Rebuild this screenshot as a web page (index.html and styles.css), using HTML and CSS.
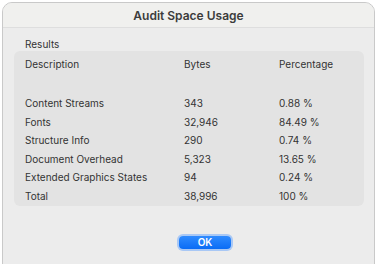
FILE: index.html
```html
<!DOCTYPE html>
<html lang="en">
<head>
<meta charset="UTF-8" />
<meta name="viewport" content="width=device-width, initial-scale=1.0"/>
<title>Audit Space Usage</title>
<link rel="stylesheet" href="styles.css">
</head>
<body>

<div class="window">
    <div class="titlebar">Audit Space Usage</div>
    <div class="content">
        <p class="group-label">Results</p>
        <div class="results">
            <div class="row head">
                <span>Description</span>
                <span>Bytes</span>
                <span>Percentage</span>
            </div>
            <div class="row blank"></div>
            <div class="row">
                <span>Content Streams</span>
                <span>343</span>
                <span>0.88 %</span>
            </div>
            <div class="row">
                <span>Fonts</span>
                <span>32,946</span>
                <span>84.49 %</span>
            </div>
            <div class="row">
                <span>Structure Info</span>
                <span>290</span>
                <span>0.74 %</span>
            </div>
            <div class="row">
                <span>Document Overhead</span>
                <span>5,323</span>
                <span>13.65 %</span>
            </div>
            <div class="row">
                <span>Extended Graphics States</span>
                <span>94</span>
                <span>0.24 %</span>
            </div>
            <div class="row">
                <span>Total</span>
                <span>38,996</span>
                <span>100 %</span>
            </div>
        </div>
        <div class="buttons">
            <button class="ok-btn">OK</button>
        </div>
    </div>
</div>

</body>
</html>
```

FILE: styles.css
```css
body {
    margin: 0;
    background: #fff;
    font-family: "Inter", "Liberation Sans", sans-serif;
    color: #333;
}

.window {
    margin: 2px 2px 0 2px;
    height: 272px;
    border: 1px solid #c9c9c9;
    border-radius: 10px;
    background: #ececec;
    overflow: hidden;
}

.titlebar {
    height: 24px;
    line-height: 25px;
    background: #f0f0ee;
    border-bottom: 1px solid #dedede;
    text-align: center;
    font-size: 12px;
    font-weight: 600;
    color: #3c3c3c;
}

.content {
    padding: 10px 10px 0 11px;
}

.group-label {
    margin: 0 0 0 11px;
    font-size: 10px;
    line-height: 13px;
}

.results {
    width: 350px;
    height: 155px;
    background: #e3e3e3;
    border-radius: 6px;
    padding-top: 4px;
    box-sizing: border-box;
}

.row {
    display: grid;
    grid-template-columns: 159px 95px 1fr;
    padding-left: 11px;
    height: 18.6px;
    line-height: 18.6px;
    font-size: 10px;
}

.row.blank {
    height: 20.5px;
}

.buttons {
    display: flex;
    justify-content: center;
    padding: 30px 0 0 32px;
}

.ok-btn {
    width: 52px;
    height: 13px;
    padding: 0;
    border: none;
    border-radius: 4px;
    background: linear-gradient(#2f8bff, #0a6cf5);
    color: #fff;
    font-family: inherit;
    font-size: 10px;
    font-weight: 600;
    line-height: 13px;
    box-shadow: 0 0 0 2px #a9c8f5;
}
```
